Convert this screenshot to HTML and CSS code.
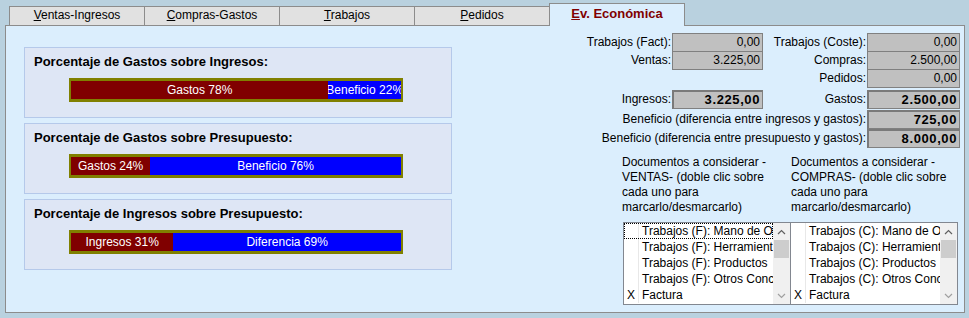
FILE: index.html
```html
<!DOCTYPE html>
<html lang="es">
<head>
  <meta charset="UTF-8" />
  <title>Ev. Económica</title>
  <link rel="stylesheet" href="styles.css">
</head>
<body>

  <!-- Tabs -->
  <div class="tabs">
    <div class="tab"><u>V</u>entas-Ingresos</div>
    <div class="tab"><u>C</u>ompras-Gastos</div>
    <div class="tab"><u>T</u>rabajos</div>
    <div class="tab"><u>P</u>edidos</div>
    <div class="tab active"><u>E</u>v. Económica</div>
  </div>

  <div class="panel">

    <!-- Charts -->
    <div class="charts">
      <div class="group">
        <h3>Porcentaje de Gastos sobre Ingresos:</h3>
        <div class="bar">
          <div class="seg red" style="width:78%"><span>Gastos 78%</span></div>
          <div class="seg blue" style="width:22%"><span>Beneficio 22%</span></div>
        </div>
      </div>
      <div class="group">
        <h3>Porcentaje de Gastos sobre Presupuesto:</h3>
        <div class="bar">
          <div class="seg red" style="width:24%"><span>Gastos 24%</span></div>
          <div class="seg blue" style="width:76%"><span>Beneficio 76%</span></div>
        </div>
      </div>
      <div class="group">
        <h3>Porcentaje de Ingresos sobre Presupuesto:</h3>
        <div class="bar">
          <div class="seg red" style="width:31%"><span>Ingresos 31%</span></div>
          <div class="seg blue" style="width:69%"><span>Diferencia 69%</span></div>
        </div>
      </div>
    </div>

    <!-- Summary -->
    <div class="summary">
      <div class="grid">
        <label>Trabajos (Fact):</label><div class="val">0,00</div>
        <label>Trabajos (Coste):</label><div class="val">0,00</div>

        <label>Ventas:</label><div class="val">3.225,00</div>
        <label>Compras:</label><div class="val">2.500,00</div>

        <span></span><span></span>
        <label>Pedidos:</label><div class="val">0,00</div>

        <label>Ingresos:</label><div class="val big">3.225,00</div>
        <label>Gastos:</label><div class="val big">2.500,00</div>

        <label class="wide">Beneficio (diferencia entre ingresos y gastos):</label><div class="val big">725,00</div>
        <label class="wide">Beneficio (diferencia entre presupuesto y gastos):</label><div class="val big">8.000,00</div>
      </div>

      <div class="docs">
        <p>Documentos a considerar -<br>VENTAS- (doble clic sobre<br>cada uno para<br>marcarlo/desmarcarlo)</p>
        <p>Documentos a considerar -<br>COMPRAS- (doble clic sobre<br>cada uno para<br>marcarlo/desmarcarlo)</p>
      </div>

      <div class="lists">
        <div class="list">
          <div class="items">
            <div class="row focus"><span class="chk"></span><span class="txt">Trabajos (F): Mano de Obra</span></div>
            <div class="row"><span class="chk"></span><span class="txt">Trabajos (F): Herramientas</span></div>
            <div class="row"><span class="chk"></span><span class="txt">Trabajos (F): Productos</span></div>
            <div class="row"><span class="chk"></span><span class="txt">Trabajos (F): Otros Conceptos</span></div>
            <div class="row"><span class="chk">X</span><span class="txt">Factura</span></div>
          </div>
          <div class="scroll">
            <div class="arrow"><svg width="9" height="6" viewBox="0 0 9 6"><path d="M1 5 L4.5 1.5 L8 5" fill="none" stroke="#606060" stroke-width="1.2"/></svg></div>
            <div class="track"><div class="thumb"></div></div>
            <div class="arrow"><svg width="9" height="6" viewBox="0 0 9 6"><path d="M1 1 L4.5 4.5 L8 1" fill="none" stroke="#a0a0a0" stroke-width="1.2"/></svg></div>
          </div>
        </div>
        <div class="list">
          <div class="items">
            <div class="row"><span class="chk"></span><span class="txt">Trabajos (C): Mano de Obra</span></div>
            <div class="row"><span class="chk"></span><span class="txt">Trabajos (C): Herramientas</span></div>
            <div class="row"><span class="chk"></span><span class="txt">Trabajos (C): Productos</span></div>
            <div class="row"><span class="chk"></span><span class="txt">Trabajos (C): Otros Conceptos</span></div>
            <div class="row"><span class="chk">X</span><span class="txt">Factura</span></div>
          </div>
          <div class="scroll">
            <div class="arrow"><svg width="9" height="6" viewBox="0 0 9 6"><path d="M1 5 L4.5 1.5 L8 5" fill="none" stroke="#606060" stroke-width="1.2"/></svg></div>
            <div class="track"><div class="thumb"></div></div>
            <div class="arrow"><svg width="9" height="6" viewBox="0 0 9 6"><path d="M1 1 L4.5 4.5 L8 1" fill="none" stroke="#a0a0a0" stroke-width="1.2"/></svg></div>
          </div>
        </div>
      </div>
    </div>

  </div>
</body>
</html>
```

FILE: styles.css
```css
/* RESET & GLOBAL */
* { margin:0; padding:0; box-sizing:border-box; }
html, body {
  height:100%; font-family:'Liberation Sans', Arial, sans-serif;
  font-size:12px; background:#b9d1df; color:#000; overflow:hidden;
}
body { padding:3px 0 0 5px; }

/* TABS */
.tabs {
  display:flex; align-items:flex-end; height:22px; margin-left:4px;
  position:relative; z-index:1;
}
.tab {
  width:136px; height:19px; margin-left:-1px;
  background:#e1e1e1; border:1px solid #8c8c8c; border-bottom:none;
  text-align:center; line-height:17px; color:#000;
}
.tab:first-child { margin-left:0; }
.tab.active {
  height:23px; margin-bottom:-1px;
  background:#dbeefd; color:#800000;
  font-weight:bold; font-size:13px; line-height:20px;
}

/* PANEL */
.panel {
  width:960px; height:288px;
  background:#dbeefd; border:1px solid #8c8c8c;
  display:flex; align-items:flex-start;
}

/* CHARTS */
.charts {
  width:428px; margin:21px 0 0 18px;
  display:flex; flex-direction:column; gap:5px;
}
.group {
  height:71px; padding:6px 0 0 9px;
  background:#dee6f5; border:1px solid #b5c9ea;
}
.group h3 {
  font-size:13px; line-height:16px; font-weight:bold;
}
.bar {
  width:334px; height:24px; margin:8px 0 0 35px;
  border:solid #808000; border-width:3px 2px;
  display:flex;
}
.seg {
  height:18px; display:flex; justify-content:center;
  overflow:hidden; white-space:nowrap;
  color:#fff; line-height:18px;
}
.red { background:#800000; }
.blue { background:#0000ff; }

/* SUMMARY */
.summary { width:380px; margin:7px 4px 0 auto; }
.grid {
  display:grid;
  grid-template-columns:92px 91px 104px 93px;
  grid-template-rows:18px 18px 21px 20px 19px 18px;
}
.grid label {
  text-align:right; line-height:18px; padding-right:1px; white-space:nowrap;
}
.grid label.wide { grid-column:1 / 4; }
.val {
  height:19px; background:#c0c0c0; border:1px solid #808080;
  text-align:right; padding-right:2px; line-height:17px;
}
.val.big {
  font-weight:bold; font-size:13px; letter-spacing:.6px;
  border-top:2px solid #7a7a7a; border-left:2px solid #7a7a7a;
  line-height:16px;
}

.docs {
  display:flex; margin:8px 0 0 42px; height:60px;
}
.docs p { width:169px; line-height:15px; white-space:nowrap; }

.lists { display:flex; margin:7px 0 0 43px; }
.list {
  width:168px; height:83px; background:#fff;
  border:1px solid #828790; display:flex;
}
.list + .list { margin-left:-1px; }
.items { flex:1; min-width:0; }
.row { display:flex; height:16px; line-height:16px; }
.row.focus { outline:1px dotted #000; outline-offset:-1px; }
.chk {
  width:15px; flex:none; text-align:center;
  border-right:1px solid #e8e8e8;
}
.txt { padding-left:3px; white-space:nowrap; overflow:hidden; }

.scroll {
  width:17px; flex:none; background:#f0f0f0;
  display:flex; flex-direction:column;
}
.arrow { height:17px; display:flex; align-items:center; justify-content:center; }
.track { flex:1; }
.thumb { height:18px; margin:0 1px; background:#cdcdcd; }
```
